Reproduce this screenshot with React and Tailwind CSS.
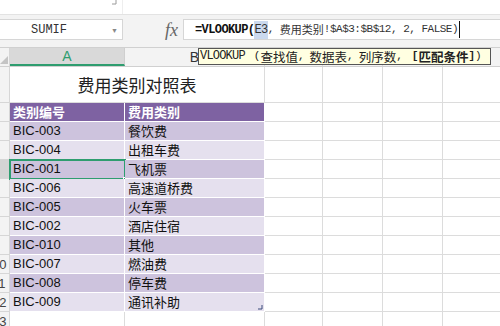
import React from 'react';

const rows = [
  ['BIC-003', '餐饮费'],
  ['BIC-004', '出租车费'],
  ['BIC-001', '飞机票'],
  ['BIC-006', '高速道桥费'],
  ['BIC-005', '火车票'],
  ['BIC-002', '酒店住宿'],
  ['BIC-010', '其他'],
  ['BIC-007', '燃油费'],
  ['BIC-008', '停车费'],
  ['BIC-009', '通讯补助'],
];

const extraCols = ['w-[58px]', 'w-[60px]', 'w-[60px]', 'w-[60px]'];

// row header is scrolled off to the left, only the last digit of two-digit numbers peeks out
const RowHead = ({ n, active, h }) => (
  <div className={`w-[10px] shrink-0 overflow-hidden border-r border-b border-[#d6d6d6] ${active ? 'bg-[#d4d4d4]' : 'bg-[#f3f3f3]'} ${h} flex items-center`}>
    {n >= 10 && <div className="ml-[-8px] text-[13px] text-[#444] whitespace-nowrap leading-none">{n}</div>}
  </div>
);

const Blank = () =>
  extraCols.map((w, i) => (
    <div key={i} className={`${w} shrink-0 h-full border-r border-b border-[#dcdcdc]`} />
  ));

export default function App() {
  return (
    <div className="w-[500px] h-[326px] overflow-hidden bg-white relative font-['Liberation_Sans','Noto_Sans_CJK_SC',sans-serif] text-[#222]">
      {/* top strip */}
      <div className="h-[15px] flex border-b border-[#e3e3e3]">
        <div className="w-[123px] border-r border-[#eeeeee] flex justify-end items-start pr-[5px]">
          <svg width="5" height="5" viewBox="0 0 5 5">
            <path d="M4 0V4H0" fill="none" stroke="#9a9a9a" strokeWidth="1" />
          </svg>
        </div>
      </div>

      {/* name box + formula bar */}
      <div className="h-[32px] bg-[#f3f3f3] flex items-start pt-[4px]">
        <div className="w-[123px] h-[21px] bg-white border border-l-0 border-[#d6d6d6] flex items-center relative">
          <span className="flex-1 text-center pr-[24px] font-['Liberation_Mono',monospace] text-[12px] text-[#333]">SUMIF</span>
          <span className="absolute right-[4px] top-[6px] text-[7px] text-[#888]">▼</span>
        </div>
        <div className="w-[60px] h-[21px] flex items-center justify-end pr-[5px]">
          <span className="font-['Liberation_Serif',serif] italic text-[18px] text-[#666] leading-none">fx</span>
        </div>
        <div className="flex-1 h-[21px] bg-white border border-r-0 border-[#d6d6d6] flex items-center pl-[11px] whitespace-nowrap text-[#333]">
          <span className="font-['Liberation_Mono',monospace] text-[12px] font-bold tracking-[-0.6px] text-[#111]">=VLOOKUP(</span>
          <span className="font-['Liberation_Mono',monospace] text-[12px] tracking-[-0.6px] bg-[#cbd9ee]">E3</span>
          <span className="font-['Liberation_Mono',monospace] text-[11px] tracking-[-0.5px]">,&nbsp;</span>
          <span className="font-['Noto_Sans_CJK_SC',sans-serif] text-[11px]">费用类别</span>
          <span className="font-['Liberation_Mono',monospace] text-[11px] tracking-[-0.5px]">!$A$3:$B$12,&nbsp;2,&nbsp;FALSE</span>
          <span className="font-['Liberation_Mono',monospace] text-[11px] border-r border-[#111]">)</span>
        </div>
      </div>

      {/* column headers */}
      <div className="h-[20px] flex bg-[#f3f3f3] border-t border-b border-[#d0d0d0]">
        <div className="w-[10px] shrink-0 border-r border-[#d6d6d6] flex items-end justify-end">
          <svg width="8" height="8" viewBox="0 0 8 8" className="mb-[2px] mr-[1px]">
            <polygon points="8,0 8,8 0,8" fill="#c4c4c4" />
          </svg>
        </div>
        <div className="w-[115px] shrink-0 bg-[#d9d9d9] border-r border-[#cfcfcf] border-b-2 border-b-[#2e9d6f] flex items-center justify-center text-[14px] text-[#2e9d6f]">A</div>
        <div className="w-[140px] shrink-0 border-r border-[#dadada] flex items-center justify-center text-[14px] text-[#333]">B</div>
        {extraCols.map((w, i) => (
          <div key={i} className={`${w} shrink-0 border-r border-[#dadada]`} />
        ))}
      </div>

      {/* function tooltip */}
      <div className="absolute left-[198px] top-[48px] w-[293px] h-[17px] bg-[#ffffe1] border border-[#555] flex items-center pl-[1px] whitespace-nowrap text-[#222] leading-[15px]">
        <span className="font-['Liberation_Mono',monospace] text-[12px] tracking-[-0.8px]">VLOOKUP</span>
        <span className="ml-[9px] font-['Liberation_Mono',monospace] text-[11px]">(</span>
        <span className="font-['Noto_Sans_CJK_SC',sans-serif] text-[12.5px]">查找值</span>
        <span className="mr-[5px] font-['Liberation_Mono',monospace] text-[11px]">,</span>
        <span className="font-['Noto_Sans_CJK_SC',sans-serif] text-[12.5px]">数据表</span>
        <span className="mr-[5px] font-['Liberation_Mono',monospace] text-[11px]">,</span>
        <span className="font-['Noto_Sans_CJK_SC',sans-serif] text-[12.5px]">列序数</span>
        <span className="mr-[9px] font-['Liberation_Mono',monospace] text-[11px]">,</span>
        <span className="font-['Liberation_Mono',monospace] text-[11px] font-bold">[</span>
        <span className="font-['Noto_Sans_CJK_SC',sans-serif] text-[12.5px] font-bold">匹配条件</span>
        <span className="font-['Liberation_Mono',monospace] text-[11px] font-bold">]</span>
        <span className="font-['Liberation_Mono',monospace] text-[11px]">)</span>
      </div>

      {/* title row */}
      <div className="h-[36px] flex">
        <RowHead n={1} h="h-[36px]" />
        <div className="w-[255px] shrink-0 h-full border-r border-b border-[#dcdcdc] flex items-center justify-center text-[17px] text-[#222] font-['Noto_Sans_CJK_SC',sans-serif]">
          费用类别对照表
        </div>
        <Blank />
      </div>

      {/* table header */}
      <div className="h-[19px] flex">
        <RowHead n={2} h="h-[19px]" />
        <div className="w-[115px] shrink-0 h-full bg-[#7e62a2] border-r border-b border-white flex items-center pl-[3px] text-[13px] font-bold text-white font-['Noto_Sans_CJK_SC',sans-serif]">类别编号</div>
        <div className="w-[140px] shrink-0 h-full bg-[#7e62a2] border-r border-b border-white flex items-center pl-[3px] text-[13px] font-bold text-white font-['Noto_Sans_CJK_SC',sans-serif]">费用类别</div>
        <Blank />
      </div>

      {/* data rows */}
      {rows.map(([code, name], i) => {
        const bg = i % 2 === 0 ? 'bg-[#cdc3dd]' : 'bg-[#e5e0ee]';
        const active = code === 'BIC-001';
        const last = i === rows.length - 1;
        return (
          <div key={code} className="h-[19px] flex">
            <RowHead n={i + 3} h="h-[19px]" active={active} />
            <div className={`w-[115px] shrink-0 h-full ${bg} border-r border-b border-white flex items-center pl-[3px] text-[13px] text-[#111] relative`}>
              {code}
              {active && (
                <>
                  <div className="absolute left-[-1px] top-[-1px] w-[117px] h-[21px] border-2 border-[#2e9d6f]" />
                  <div className="absolute right-[-4px] bottom-[-4px] w-[5px] h-[5px] bg-[#2e9d6f] border border-white" />
                </>
              )}
            </div>
            <div className={`w-[140px] shrink-0 h-full ${bg} border-r border-b border-white flex items-center pl-[3px] text-[13px] text-[#111] font-['Noto_Sans_CJK_SC',sans-serif] relative`}>
              {name}
              {last && (
                <svg width="5" height="5" viewBox="0 0 5 5" className="absolute right-[1px] bottom-[1px]">
                  <path d="M4 0V4H0" fill="none" stroke="#3b4a7a" strokeWidth="1" />
                </svg>
              )}
            </div>
            <Blank />
          </div>
        );
      })}

      {/* row 13 */}
      <div className="h-[19px] flex">
        <RowHead n={13} h="h-[19px]" />
        <div className="w-[115px] shrink-0 h-full border-r border-b border-[#dcdcdc]" />
        <div className="w-[140px] shrink-0 h-full border-r border-b border-[#dcdcdc]" />
        <Blank />
      </div>
    </div>
  );
}
